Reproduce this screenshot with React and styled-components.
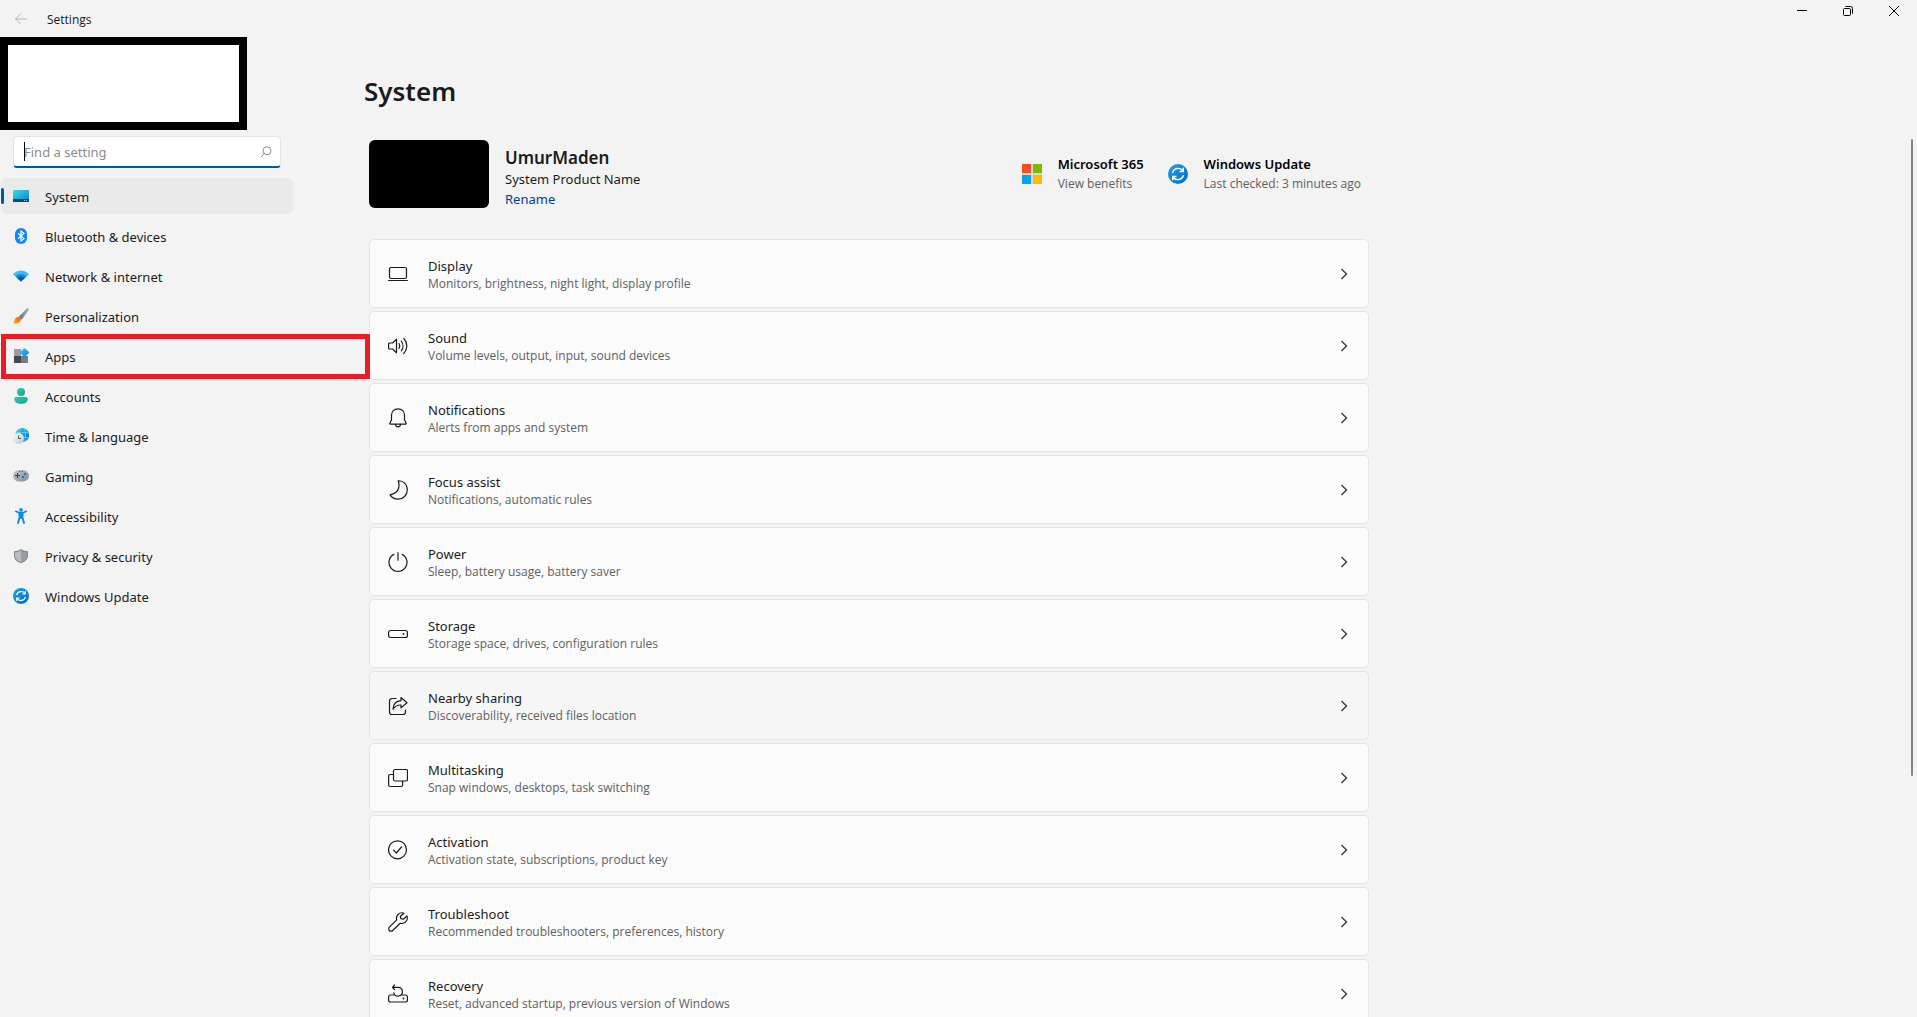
import React from 'react';
import styled, { createGlobalStyle, css } from 'styled-components';

const GlobalStyle = createGlobalStyle`
  * {
    box-sizing: border-box;
  }

  body {
    margin: 0;
    background: #f3f3f3;
    color: #1b1b1b;
    font-family: "Noto Sans", "Open Sans", sans-serif;
    font-size: 13px;
    line-height: 20px;
  }

  button, input {
    font: inherit;
    color: inherit;
  }
`;

const Window = styled.div`
  display: flex;
  flex-direction: column;
  height: 100vh;
  overflow: hidden;
`;

const TitleBar = styled.header`
  display: flex;
  flex: none;
  height: 37px;
`;

const BackButton = styled.button`
  display: flex;
  align-items: center;
  justify-content: center;
  width: 42px;
  height: 38px;
  padding: 0;
  border: 0;
  background: none;
  color: #b4b4b4;
`;

const AppName = styled.span`
  flex: 1;
  padding: 10px 0 0 5px;
  font-family: "Open Sans", sans-serif;
  font-size: 12px;
`;

const WindowButton = styled.button`
  display: flex;
  align-items: center;
  justify-content: center;
  width: 46px;
  height: 22px;
  padding: 0;
  border: 0;
  background: none;
`;

const Body = styled.div`
  display: flex;
  flex: 1;
  min-height: 0;
`;

const Sidebar = styled.aside`
  flex: 0 0 364px;
`;

const AccountBox = styled.div`
  width: 247px;
  height: 93px;
  border: 8px solid #000;
  background: #fff;
`;

const SearchBox = styled.label`
  position: relative;
  display: flex;
  align-items: center;
  width: 268px;
  height: 32px;
  margin: 6px 0 10px 13px;
  padding-right: 8px;
  border: 1px solid #e3e3e3;
  border-bottom: 2px solid #005a9e;
  border-radius: 4px;
  background: #fff;
  color: #8c8c8c;
`;

const SearchInput = styled.input`
  flex: 1;
  min-width: 0;
  padding: 0 0 0 10px;
  border: 0;
  outline: 0;
  background: none;

  &::placeholder {
    color: #8c8c8c;
    opacity: 1;
  }
`;

const Caret = styled.span`
  position: absolute;
  top: 5px;
  left: 10px;
  width: 1px;
  height: 19px;
  background: #000;
`;

const Nav = styled.nav`
  display: flex;
  flex-direction: column;
  gap: 4px;
  width: 292px;
  margin-left: 1px;
`;

const NavLink = styled.a`
  position: relative;
  display: flex;
  align-items: center;
  gap: 16px;
  height: 36px;
  padding: 0 12px;
  border-radius: 5px;
  color: inherit;
  text-decoration: none;

  ${({ $active }) => $active && css`
    background: #eaeaea;

    &::before {
      content: "";
      position: absolute;
      top: 10px;
      left: 0;
      width: 3px;
      height: 16px;
      border-radius: 2px;
      background: #005a9e;
    }
  `}
`;

const NavLabel = styled.span`
  padding-top: 1px;
`;

const Highlight = styled.span`
  position: absolute;
  inset: -4px -77px -5px 0;
  z-index: 1;
  border: 5px solid #ed1c24;
  pointer-events: none;
`;

const Main = styled.main`
  flex: 1;
  min-width: 0;
  padding-top: 34px;
  overflow: hidden;
`;

const Content = styled.div`
  max-width: 1005px;
`;

const PageTitle = styled.h1`
  margin: 0 0 29px;
  font-size: 26px;
  font-weight: 600;
  line-height: 40px;
`;

const DeviceRow = styled.section`
  display: flex;
  margin: 0 0 30px 5px;
`;

const Wallpaper = styled.div`
  width: 120px;
  height: 68px;
  border-radius: 6px;
  background: #000;
`;

const DeviceInfo = styled.div`
  flex: 1;
  padding: 7px 0 0 16px;
`;

const DeviceName = styled.h2`
  margin: 0;
  font-size: 17px;
  font-weight: 600;
  line-height: 22px;
`;

const DeviceModel = styled.p`
  margin: 0;
`;

const RenameLink = styled.a`
  display: block;
  color: #003e92;
  text-decoration: none;
`;

const Shortcut = styled.a`
  display: flex;
  align-items: center;
  gap: 16px;
  padding: 0 ${({ $last }) => ($last ? 8 : 24)}px 2px 0;
  color: #000;
  text-decoration: none;
`;

const ShortcutTitle = styled.strong`
  display: block;
  font-weight: 600;
`;

const Caption = styled.span`
  display: block;
  color: #606060;
  font-family: "Open Sans", sans-serif;
  font-size: 12px;
  line-height: ${({ $tall }) => ($tall ? 20 : 16)}px;
`;

const CardList = styled.div`
  display: flex;
  flex-direction: column;
  gap: 3px;
  padding-left: 5px;
`;

const Card = styled.button`
  display: flex;
  align-items: center;
  gap: 20px;
  width: 100%;
  height: 69px;
  padding: 0 20px 0 18px;
  border: 1px solid #e5e5e5;
  border-radius: 5px;
  background: ${({ $hover }) => ($hover ? '#f6f6f6' : '#fbfbfb')};
  text-align: left;
`;

const CardText = styled.span`
  flex: 1;
`;

const CardTitle = styled.span`
  display: block;
`;

const ScrollThumb = styled.div`
  flex: none;
  width: 2px;
  height: 65%;
  margin: 102px 4px 0 0;
  border-radius: 1px;
  background: #868686;
`;

// coloured sidebar icons, 16px grid

const SystemIcon = () => (
  <svg width="16" height="16" viewBox="0 0 16 16">
    <defs>
      <linearGradient id="sys" x1="0" y1="0" x2="1" y2="1">
        <stop offset="0" stopColor="#36dbe8" />
        <stop offset="1" stopColor="#1580cc" />
      </linearGradient>
    </defs>
    <rect y="2" width="16" height="12" rx="0.8" fill="url(#sys)" />
    <path d="M0 11h16v2.2a.8.8 0 0 1-.8.8H.8a.8.8 0 0 1-.8-.8z" fill="#0b4a72" />
    <path d="M11 12h1v1h-1zM13 12h1v1h-1z" fill="#9ed3ee" />
  </svg>
);

const BluetoothIcon = () => (
  <svg width="16" height="16" viewBox="0 0 16 16">
    <rect x="2" width="12" height="16" rx="6" fill="#0a84ff" />
    <path d="M5 5.2l6 5.4L8 13V3l3 2.4-6 5.4" fill="none" stroke="#fff" strokeWidth="1.2" />
  </svg>
);

const NetworkIcon = () => (
  <svg width="16" height="16" viewBox="0 0 16 16">
    <path d="M0 6.2C2 3.7 5 2.4 8 2.4s6 1.3 8 3.8L8 13.6z" fill="#35c1f1" />
    <path d="M2.500 8.500C4 6.800 6 6 8 6s4 .8 5.500 2.500L8 13.600z" fill="#1a87dc" />
    <path d="M4.400 10.300C5.400 9.300 6.700 8.800 8 8.800s2.600.5 3.600 1.500L8 13.600z" fill="#0b57a8" />
  </svg>
);

const BrushIcon = () => (
  <svg width="16" height="16" viewBox="0 0 16 16">
    <defs>
      <linearGradient id="tip" x1="0" y1="1" x2="1" y2="0">
        <stop offset="0" stopColor="#ffb02e" />
        <stop offset="0.4" stopColor="#f98b22" />
        <stop offset="1" stopColor="#e8610e" />
      </linearGradient>
      <linearGradient id="handle" x1="0" y1="1" x2="1" y2="0">
        <stop offset="0" stopColor="#666d75" />
        <stop offset="1" stopColor="#a9b0b8" />
      </linearGradient>
    </defs>
    <path d="M5.500 9L13.500.8c.9-.9 2.800-.4 2.300 1L8.700 11.800z" fill="url(#handle)" />
    <path d="M1.800 11.300c.8-2 2.800-3 4.500-2 1.700 1 2 3 .7 4.500C5.500 15.700 2.500 16 0 15.200c1.200-.6 1.200-2.300 1.800-3.900z" fill="url(#tip)" />
  </svg>
);

const AppsIcon = () => (
  <svg width="16" height="16" viewBox="0 0 16 16">
    <defs>
      <linearGradient id="gem" x1="0" y1="0" x2="1" y2="1">
        <stop offset="0" stopColor="#3ccbf4" />
        <stop offset="1" stopColor="#0f78d0" />
      </linearGradient>
    </defs>
    <path d="M1.500 1H8v7H1V1.500a.5.500 0 0 1 .5-.5z" fill="#9a9fa5" />
    <path d="M1 8h7v7H1.500a.5.500 0 0 1-.5-.5z" fill="#44484d" />
    <path d="M8 8h7v6.500a.5.500 0 0 1-.5.500H8z" fill="#777d84" />
    <path d="M10.800.4a1 1 0 0 1 1.400 0l3.400 3.400a1 1 0 0 1 0 1.400l-3.400 3.400a1 1 0 0 1-1.400 0L7.400 5.200a1 1 0 0 1 0-1.400z" fill="url(#gem)" />
  </svg>
);

const AccountsIcon = () => (
  <svg width="16" height="16" viewBox="0 0 16 16">
    <defs>
      <linearGradient id="acc" x1="0" y1="0" x2="1" y2="1">
        <stop offset="0" stopColor="#2fd0b5" />
        <stop offset="1" stopColor="#12a08c" />
      </linearGradient>
    </defs>
    <circle cx="8" cy="4" r="4" fill="url(#acc)" />
    <path d="M3 9h10a1.800 1.800 0 0 1 1.800 1.800C14.800 14.200 11.600 16 8 16s-6.800-1.800-6.800-5.200A1.800 1.800 0 0 1 3 9z" fill="url(#acc)" />
  </svg>
);

const TimeIcon = () => (
  <svg width="16" height="16" viewBox="0 0 16 16">
    <defs>
      <linearGradient id="globe" x1="0" y1="0" x2="1" y2="1">
        <stop offset="0" stopColor="#35d3e6" />
        <stop offset="1" stopColor="#0b68c8" />
      </linearGradient>
      <linearGradient id="clock" x1="0" y1="0" x2="1" y2="1">
        <stop offset="0" stopColor="#fafafa" />
        <stop offset="1" stopColor="#c4c6c9" />
      </linearGradient>
    </defs>
    <circle cx="9.200" cy="7" r="6.900" fill="url(#globe)" />
    <path d="M3 4.600h12.500M3 9.500h12.500M7 .8C5.700 4 5.700 9 7 12M11.500.8c1.500 3.500 1.500 8.500 0 12.400" fill="none" stroke="#6be0f2" strokeWidth="0.7" />
    <circle cx="5.500" cy="10.500" r="5.500" fill="url(#clock)" />
    <path d="M5.500 7.500v3H8" fill="none" stroke="#555" />
  </svg>
);

const GamingIcon = () => (
  <svg width="16" height="16" viewBox="0 0 16 16">
    <defs>
      <linearGradient id="pad" x1="0" y1="0" x2="1" y2="1">
        <stop offset="0" stopColor="#c5cad0" />
        <stop offset="1" stopColor="#858c94" />
      </linearGradient>
    </defs>
    <rect y="2" width="16" height="11.500" rx="5.700" fill="url(#pad)" />
    <path d="M4.500 5v5M2 7.500h5" stroke="#3a3e42" />
    <path d="M6 3.500h1.200M8.800 3.500H10" stroke="#555b61" />
    <circle cx="12" cy="6" r="1.200" fill="#1277cf" />
    <circle cx="10" cy="9" r="1.200" fill="#1277cf" />
  </svg>
);

const AccessibilityIcon = () => (
  <svg width="16" height="16" viewBox="0 0 16 16">
    <g fill="none" stroke="#0f88dd" strokeLinecap="round" strokeLinejoin="round">
      <path d="M2.800 3.300L6 4.800h4l3.200-1.500" strokeWidth="1.700" />
      <path d="M6.500 5.500v4.300L5 15M9.500 5.500v4.300L11 15" strokeWidth="1.900" />
      <path d="M8 5v5" strokeWidth="2" />
    </g>
    <circle cx="8" cy="1.900" r="1.900" fill="#1490df" />
  </svg>
);

const ShieldIcon = () => (
  <svg width="16" height="16" viewBox="0 0 16 16">
    <path d="M8 1c2 1.500 4.300 2.200 7 2.300V7.500c0 3.700-2.600 6.200-7 7.700-4.400-1.500-7-4-7-7.700V3.300C3.700 3.200 6 2.500 8 1z" fill="#82868b" />
    <path d="M8 2.200c1.800 1.200 3.800 1.800 6 2v3.300c0 3.200-2.200 5.300-6 6.700z" fill="#999da3" />
    <path d="M8 2.200C6.200 3.400 4.200 4 2 4.200v3.300c0 3.200 2.200 5.300 6 6.700z" fill="#b9bdc3" />
  </svg>
);

const UpdateIcon = ({ size = 16 }) => (
  <svg width={size} height={size} viewBox="0 0 20 20">
    <defs>
      <linearGradient id="upd" x1="0" y1="0" x2="1" y2="1">
        <stop offset="0" stopColor="#1ea3e8" />
        <stop offset="1" stopColor="#0468cc" />
      </linearGradient>
    </defs>
    <circle cx="10" cy="10" r="10" fill="url(#upd)" />
    <g fill="none" stroke="#fff" strokeWidth="1.400">
      <path d="M4.500 9A5.800 5.800 0 0 1 15 7M15.500 11A5.800 5.800 0 0 1 5 13" />
      <path d="M15.300 3.800v3.700h-3.700M4.700 16.200v-3.700h3.700" />
    </g>
  </svg>
);

const MicrosoftLogo = () => (
  <svg width="20" height="20" viewBox="0 0 20 20">
    <path fill="#d9d9d9" d="M9 0h2v20H9zM0 9h20v2H0z" />
    <path fill="#f25022" d="M0 0h9v9H0z" />
    <path fill="#7fba00" d="M11 0h9v9h-9z" />
    <path fill="#00a4ef" d="M0 11h9v9H0z" />
    <path fill="#ffb900" d="M11 11h9v9h-9z" />
  </svg>
);

// outline icons on the cards, 20px grid
const LineIcon = ({ children }) => (
  <svg
    width="20"
    height="20"
    viewBox="0 0 20 20"
    fill="none"
    stroke="#1b1b1b"
    strokeWidth="1.200"
    strokeLinejoin="round"
    strokeLinecap="round"
  >
    {children}
  </svg>
);

const navItems = [
  { label: 'System', icon: <SystemIcon />, active: true },
  { label: 'Bluetooth & devices', icon: <BluetoothIcon /> },
  { label: 'Network & internet', icon: <NetworkIcon /> },
  { label: 'Personalization', icon: <BrushIcon /> },
  { label: 'Apps', icon: <AppsIcon />, marked: true },
  { label: 'Accounts', icon: <AccountsIcon /> },
  { label: 'Time & language', icon: <TimeIcon /> },
  { label: 'Gaming', icon: <GamingIcon /> },
  { label: 'Accessibility', icon: <AccessibilityIcon /> },
  { label: 'Privacy & security', icon: <ShieldIcon /> },
  { label: 'Windows Update', icon: <UpdateIcon /> },
];

const cards = [
  {
    title: 'Display',
    description: 'Monitors, brightness, night light, display profile',
    icon: <path d="M3 3.500h14a1.500 1.500 0 0 1 1.500 1.500v8a1.500 1.500 0 0 1-1.500 1.500H3A1.500 1.500 0 0 1 1.500 13V5A1.500 1.500 0 0 1 3 3.500zM.6 16.500h18.800" />,
  },
  {
    title: 'Sound',
    description: 'Volume levels, output, input, sound devices',
    icon: (
      <path d="M8.500 3.200v13.600L4.500 13H1.600a1 1 0 0 1-1-1V8a1 1 0 0 1 1-1h2.900zM11 7.500c.9 1.500.9 3.500 0 5M13.300 5.200c2.200 2.800 2.200 6.800 0 9.600M15.800 2.500c4 4.300 4 10.700 0 15" />
    ),
  },
  {
    title: 'Notifications',
    description: 'Alerts from apps and system',
    icon: (
      <path d="M10 .8c-3.800 0-6.500 2.800-6.500 6.400v4.600l-1.700 3.600c-.1.400.1.700.5.700h15.400c.4 0 .6-.3.5-.7l-1.700-3.600V7.200C16.500 3.600 13.800.8 10 .8zM7.500 16.300a2.500 2.500 0 0 0 5 0" />
    ),
  },
  {
    title: 'Focus assist',
    description: 'Notifications, automatic rules',
    icon: <path d="M10.200.8c5.200-.4 9.100 3.800 9.100 8.900 0 5.400-4.100 9.500-9.300 9.500-3.300 0-6.200-1.600-8-4.300 5-1.100 7.500-3.200 8.500-6.400.8-2.600.6-5.200-.3-7.700z" />,
  },
  {
    title: 'Power',
    description: 'Sleep, battery usage, battery saver',
    icon: <path d="M10 .7v7.500M5.800 2.400a9 9 0 1 0 8.400 0" />,
  },
  {
    title: 'Storage',
    description: 'Storage space, drives, configuration rules',
    icon: (
      <>
        <rect x="0.600" y="6.500" width="18.800" height="7" rx="2" />
        <circle cx="15.500" cy="10" r="0.400" />
      </>
    ),
  },
  {
    title: 'Nearby sharing',
    description: 'Discoverability, received files location',
    hover: true,
    icon: (
      <path d="M8 2.500H4A2.500 2.500 0 0 0 1.500 5v11A2.500 2.500 0 0 0 4 18.500h11a2.500 2.500 0 0 0 2.500-2.500v-2M13 1.500l6 5.200-6 5.200V9c-3.500-.2-6 1-8 4.200.3-5 3-8.200 8-8.500z" />
    ),
  },
  {
    title: 'Multitasking',
    description: 'Snap windows, desktops, task switching',
    icon: (
      <>
        <rect x="5.500" y="1.500" width="14" height="11.500" rx="1.500" />
        <path d="M5.500 6.500H2.100A1.500 1.500 0 0 0 .6 8v9a1.500 1.500 0 0 0 1.500 1.500h11a1.500 1.500 0 0 0 1.500-1.500v-4" />
      </>
    ),
  },
  {
    title: 'Activation',
    description: 'Activation state, subscriptions, product key',
    icon: <path d="M18.500 9.800a9 9 0 1 1-18 0 9 9 0 0 1 18 0zM5.500 10.200l2.800 2.800L13.500 7" />,
  },
  {
    title: 'Troubleshoot',
    description: 'Recommended troubleshooters, preferences, history',
    icon: (
      <path d="M16 1.200a5.500 5.500 0 0 0-7.300 6.700L1.400 15.200a2.300 2.300 0 0 0 0 3.300 2.300 2.300 0 0 0 3.300 0l7.500-7.300a5.500 5.500 0 0 0 6.700-7.300l-3.400 3.300-2.700-.6-.4-2.300z" />
    ),
  },
  {
    title: 'Recovery',
    description: 'Reset, advanced startup, previous version of Windows',
    icon: (
      <>
        <path d="M5.500 11H2.600a2 2 0 0 0-2 2v3a2 2 0 0 0 2 2h14.800a2 2 0 0 0 2-2v-3a2 2 0 0 0-2-2h-2.900" />
        <path d="M6.500 1L4.500 3.300l2 2.200M4.800 3.300H10a4.400 4.400 0 1 1-4.200 5.500" />
        <circle cx="15.500" cy="14.500" r="0.400" />
      </>
    ),
  },
];

export default function App() {
  return (
    <>
      <GlobalStyle />
      <Window>
        <TitleBar>
          <BackButton aria-label="Back">
            <svg width="12" height="12" viewBox="0 0 12 12" fill="none" stroke="currentColor" strokeLinecap="round">
              <path d="M.6 6h11.200M5.500 1L.6 6l4.900 5" />
            </svg>
          </BackButton>
          <AppName>Settings</AppName>
          <WindowButton aria-label="Minimize">
            <svg width="10" height="10" viewBox="0 0 10 10" stroke="#000">
              <path d="M0 4.500h10" />
            </svg>
          </WindowButton>
          <WindowButton aria-label="Restore">
            <svg width="10" height="10" viewBox="0 0 10 10" fill="none" stroke="#000">
              <rect x="0.500" y="2.500" width="7" height="7" rx="1" />
              <path d="M2.500.5h5a2 2 0 0 1 2 2v5" />
            </svg>
          </WindowButton>
          <WindowButton aria-label="Close">
            <svg width="10" height="10" viewBox="0 0 10 10" stroke="#000">
              <path d="M0 0l10 10M10 0L0 10" />
            </svg>
          </WindowButton>
        </TitleBar>
        <Body>
          <Sidebar>
            <AccountBox />
            <SearchBox>
              <SearchInput type="text" placeholder="Find a setting" aria-label="Find a setting" />
              <Caret />
              <svg width="12" height="12" viewBox="0 0 12 12" fill="none" stroke="currentColor">
                <circle cx="7" cy="4.700" r="4" />
                <path d="M4.200 7.600L.8 11.200" />
              </svg>
            </SearchBox>
            <Nav>
              {navItems.map((item) => (
                <NavLink
                  key={item.label}
                  href="#"
                  $active={item.active}
                  aria-current={item.active ? 'page' : undefined}
                >
                  {item.icon}
                  <NavLabel>{item.label}</NavLabel>
                  {item.marked && <Highlight />}
                </NavLink>
              ))}
            </Nav>
          </Sidebar>
          <Main>
            <Content>
              <PageTitle>System</PageTitle>
              <DeviceRow>
                <Wallpaper />
                <DeviceInfo>
                  <DeviceName>UmurMaden</DeviceName>
                  <DeviceModel>System Product Name</DeviceModel>
                  <RenameLink href="#">Rename</RenameLink>
                </DeviceInfo>
                <Shortcut href="#">
                  <MicrosoftLogo />
                  <span>
                    <ShortcutTitle>Microsoft 365</ShortcutTitle>
                    <Caption $tall>View benefits</Caption>
                  </span>
                </Shortcut>
                <Shortcut href="#" $last>
                  <UpdateIcon size={20} />
                  <span>
                    <ShortcutTitle>Windows Update</ShortcutTitle>
                    <Caption $tall>Last checked: 3 minutes ago</Caption>
                  </span>
                </Shortcut>
              </DeviceRow>
              <CardList>
                {cards.map((card) => (
                  <Card key={card.title} $hover={card.hover}>
                    <LineIcon>{card.icon}</LineIcon>
                    <CardText>
                      <CardTitle>{card.title}</CardTitle>
                      <Caption>{card.description}</Caption>
                    </CardText>
                    <svg width="8" height="12" viewBox="0 0 8 12" fill="none" stroke="#333" strokeWidth="1.300">
                      <path d="M1.500 1l5 5-5 5" />
                    </svg>
                  </Card>
                ))}
              </CardList>
            </Content>
          </Main>
          <ScrollThumb />
        </Body>
      </Window>
    </>
  );
}
